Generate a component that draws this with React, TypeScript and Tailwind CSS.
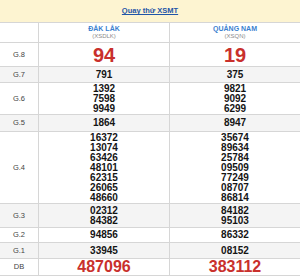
type Row = {
  label: string;
  a: string[];
  b: string[];
  h: string;
  size: "big" | "db" | "normal";
  shaded?: boolean;
};

const rows: Row[] = [
  { label: "G.8", a: ["94"], b: ["19"], h: "h-[24px]", size: "big" },
  { label: "G.7", a: ["791"], b: ["375"], h: "h-[16px]", size: "normal", shaded: true },
  { label: "G.6", a: ["1392", "7598", "9949"], b: ["9821", "9092", "6299"], h: "h-[32px]", size: "normal" },
  { label: "G.5", a: ["1864"], b: ["8947"], h: "h-[17px]", size: "normal", shaded: true },
  {
    label: "G.4",
    a: ["16372", "13074", "63426", "48101", "62315", "26065", "48660"],
    b: ["35674", "89634", "25784", "09509", "77249", "08707", "86814"],
    h: "h-[72px]",
    size: "normal",
  },
  { label: "G.3", a: ["02312", "84382"], b: ["84182", "95103"], h: "h-[24px]", size: "normal", shaded: true },
  { label: "G.2", a: ["94856"], b: ["86332"], h: "h-[15px]", size: "normal" },
  { label: "G.1", a: ["33945"], b: ["08152"], h: "h-[16px]", size: "normal", shaded: true },
  { label: "DB", a: ["487096"], b: ["383112"], h: "h-[17px]", size: "db" },
];

function Numbers({ values, size }: { values: string[]; size: Row["size"] }) {
  const cls =
    size === "big"
      ? "text-[20px] leading-none text-[#c9302c]"
      : size === "db"
      ? "text-[16px] leading-none text-[#c9302c]"
      : "text-[10px] leading-[10px] text-[#151515]";
  return (
    <div className={`flex flex-col items-center justify-center font-bold ${cls}`}>
      {values.map((v, i) => (
        <span key={i}>{v}</span>
      ))}
    </div>
  );
}

export default function App() {
  return (
    <div className="w-[300px] h-[276px] bg-white overflow-hidden font-['Liberation_Sans',Arial,sans-serif]">
      {/* title bar */}
      <div className="h-[23px] bg-[#fdf4d1] border-b border-[#d6d6d6] flex items-center justify-center">
        <a href="#" className="text-[7.5px] text-[#1f55a8] underline font-bold">
          Quay thử XSMT
        </a>
      </div>

      {/* province header */}
      <div className="grid grid-cols-[39px_131px_1fr] h-[20px] border-b border-[#d6d6d6]">
        <div className="border-r border-[#d6d6d6]" />
        <div className="border-r border-[#d6d6d6] flex flex-col items-center justify-center">
          <span className="text-[7px] leading-[8px] font-bold text-[#3a7fd0]">ĐẮK LẮK</span>
          <span className="text-[6px] leading-[7px] text-[#8a8a8a]">(XSDLK)</span>
        </div>
        <div className="flex flex-col items-center justify-center">
          <span className="text-[7px] leading-[8px] font-bold text-[#3a7fd0]">QUẢNG NAM</span>
          <span className="text-[6px] leading-[7px] text-[#8a8a8a]">(XSQN)</span>
        </div>
      </div>

      {rows.map((r) => (
        <div
          key={r.label}
          className={`grid grid-cols-[39px_131px_1fr] ${r.h} border-b border-[#d6d6d6] ${
            r.shaded ? "bg-[#f4f4f4]" : "bg-white"
          }`}
        >
          <div className="border-r border-[#d6d6d6] flex items-center justify-center text-[7.5px] text-[#444]">
            {r.label}
          </div>
          <div className="border-r border-[#d6d6d6] flex items-center justify-center">
            <Numbers values={r.a} size={r.size} />
          </div>
          <div className="flex items-center justify-center">
            <Numbers values={r.b} size={r.size} />
          </div>
        </div>
      ))}
    </div>
  );
}
